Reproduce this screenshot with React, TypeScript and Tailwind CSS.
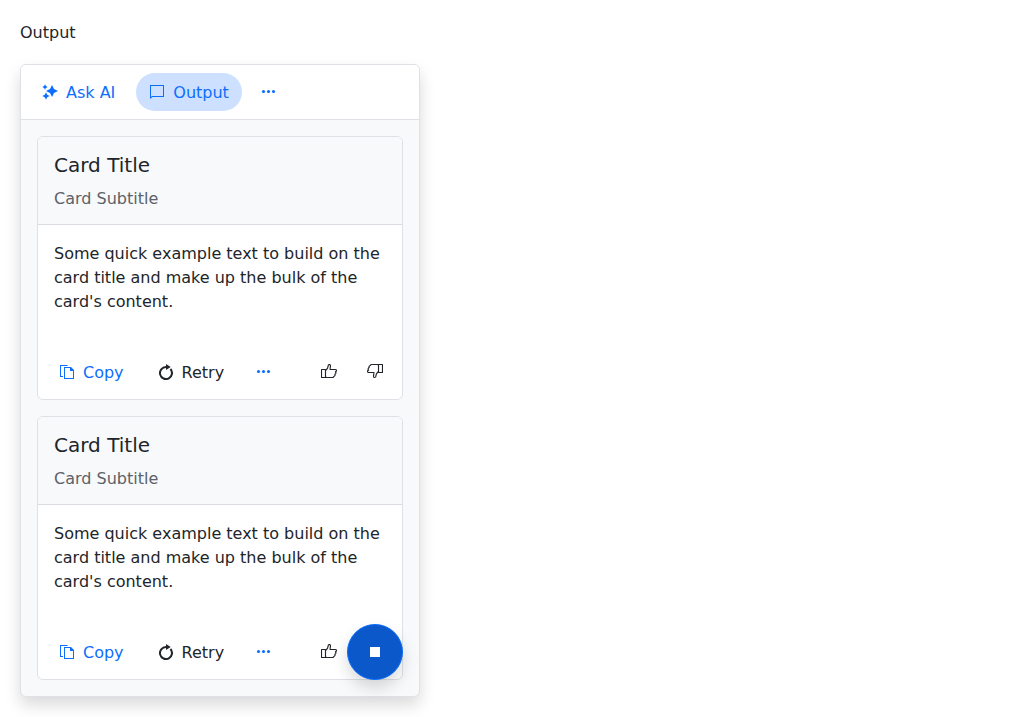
import type { ReactNode } from 'react';

type IconProps = { children: ReactNode; className?: string };

const Icon = ({ children, className = '' }: IconProps) => (
  <svg viewBox="0 0 16 16" className={`h-4 w-4 shrink-0 ${className}`} fill="currentColor" aria-hidden="true">
    {children}
  </svg>
);

const SparklesIcon = () => (
  <Icon>
    <path d="M10 1L12 5L16 7L12 9L10 13L8 9L4 7L8 5Z" />
    <path d="M3 .3L3.9 2.1L5.7 3L3.9 3.9L3 5.7L2.1 3.9L.3 3L2.1 2.1Z" />
    <path d="M4 8.3L5.2 10.8L7.7 12L5.2 13.2L4 15.7L2.8 13.2L.3 12L2.8 10.8Z" />
  </Icon>
);

const CommentIcon = () => (
  <Icon>
    <path d="M1 1h14v12H3.5L1 15V1Zm1 1v11l1-1h11V2H2Z" />
  </Icon>
);

const MoreIcon = () => (
  <Icon>
    <circle cx="2.5" cy="7.5" r="1.55" />
    <circle cx="7.5" cy="7.5" r="1.55" />
    <circle cx="12.5" cy="7.5" r="1.55" />
  </Icon>
);

const CopyIcon = () => (
  <Icon>
    <path d="M1 1h7l1 1H2v10h2v1H1V1Z" />
    <path fillRule="evenodd" d="M5 3h7l3 3v9H5V3Zm1 1v10h8V7h-3V4H6Z" />
  </Icon>
);

const RetryIcon = () => (
  <Icon>
    <path d="M8 0v2a7 7 0 1 0 5.2 2.3l-1.5 1.4A5 5 0 1 1 8 4v2l4.7-3L8 0Z" />
  </Icon>
);

const ThumbIcon = ({ down = false }: { down?: boolean }) => (
  <Icon className={down ? 'relative -top-px rotate-180' : 'relative'}>
    <g
      fill="none"
      stroke="currentColor"
      strokeWidth="1.15"
      strokeLinejoin="round"
      transform={down ? 'translate(0 1)' : undefined}
    >
      <path d="M.5 5.5h4v8h-4z" />
      <path d="M4.5 6.5 6.5 4.3 7.4 1Q7.8.5 8.6.5 9.5.7 9.5 1.8L9 5.5h5.4q1.1 0 1.1 1t-1.1 1.4q.8.5.4 1.5t-1 1q.4.8 0 1.4t-1.1.7q0 1-1.2 1H5.5l-1-.4" />
    </g>
  </Icon>
);

type ButtonProps = { icon: ReactNode; label?: string; title?: string; className?: string };

const Button = ({ icon, label, title, className = '' }: ButtonProps) => (
  <button
    type="button"
    aria-label={title}
    className={`flex h-[38px] shrink-0 items-center justify-center gap-2 rounded-full ${
      label ? 'px-[13px]' : 'w-[38px]'
    } ${className}`}
  >
    {icon}
    {label && <span className="pt-0.5">{label}</span>}
  </button>
);

const OutputCard = () => (
  <article className="flex h-[264px] flex-col overflow-hidden rounded-md border border-[#dee2e6] bg-white">
    <header className="flex h-[88px] shrink-0 flex-col border-b border-[#d9dce0] bg-[#f8f9fa] px-4 pt-4">
      <h2 className="text-xl leading-6">Card Title</h2>
      <p className="mt-2.5 leading-6 text-[#5b6269]">Card Subtitle</p>
    </header>
    <p className="grow px-4 pt-[17px] leading-6">
      Some quick example text to build on the card title and make up the bulk of the card's content.
    </p>
    <footer className="flex gap-2 p-2">
      <Button icon={<CopyIcon />} label="Copy" className="text-[#0d6efd]" />
      <Button icon={<RetryIcon />} label="Retry" />
      <Button icon={<MoreIcon />} title="More" className="text-[#0d6efd]" />
      <Button icon={<ThumbIcon />} title="Like" className="ml-auto" />
      <Button icon={<ThumbIcon down />} title="Dislike" />
    </footer>
  </article>
);

export default function App() {
  return (
    <main className="px-5 pt-[21px] pb-5 font-['DejaVu_Sans',sans-serif] text-base leading-6 text-[#212529]">
      <p className="mb-[19px]">Output</p>
      <section className="relative w-[400px] rounded-md border border-[#dee2e6] bg-[#f8f9fa] shadow-[0_8px_16px_rgba(0,0,0,0.15)]">
        <nav className="flex h-[55px] items-center gap-2 rounded-t-[5px] border-b border-[#dee2e6] bg-white px-2 text-[#0d6efd]">
          <Button icon={<SparklesIcon />} label="Ask AI" />
          <Button icon={<CommentIcon />} label="Output" className="bg-[#cee0ff]" />
          <Button icon={<MoreIcon />} title="More" />
        </nav>
        <div className="flex flex-col gap-4 p-4">
          <OutputCard />
          <OutputCard />
        </div>
        <button
          type="button"
          aria-label="Stop"
          className="absolute right-4 bottom-4 flex h-14 w-14 items-center justify-center rounded-full border border-[#0d6efd] bg-[#0a58ca] shadow-[0_8px_16px_rgba(0,0,0,0.15)]"
        >
          <span className="h-2.5 w-2.5 bg-white" />
        </button>
      </section>
    </main>
  );
}
